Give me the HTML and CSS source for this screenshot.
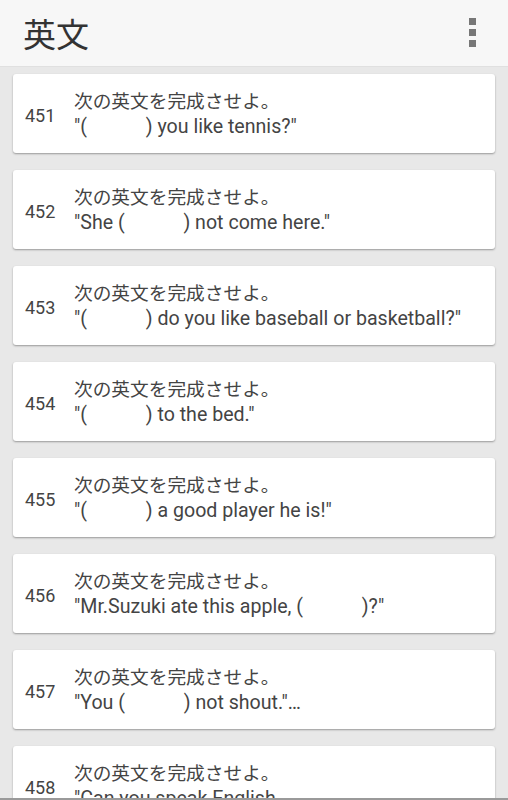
FILE: index.html
```html
<!DOCTYPE html>
<html lang="ja">
<head>
<meta charset="utf-8">
<link rel="stylesheet" href="styles.css">
</head>
<body>
<header class="appbar">
  <h1 class="title">英文</h1>
  <div class="menu" aria-label="menu"><span></span><span></span><span></span></div>
</header>
<main class="list">
  <div class="card"><span class="num">451</span><div class="text"><div>次の英文を完成させよ。</div><div class="en">"(　　　) you like tennis?"</div></div></div>
  <div class="card"><span class="num">452</span><div class="text"><div>次の英文を完成させよ。</div><div class="en">"She (　　　) not come here."</div></div></div>
  <div class="card"><span class="num">453</span><div class="text"><div>次の英文を完成させよ。</div><div class="en">"(　　　) do you like baseball or basketball?"</div></div></div>
  <div class="card"><span class="num">454</span><div class="text"><div>次の英文を完成させよ。</div><div class="en">"(　　　) to the bed."</div></div></div>
  <div class="card"><span class="num">455</span><div class="text"><div>次の英文を完成させよ。</div><div class="en">"(　　　) a good player he is!"</div></div></div>
  <div class="card"><span class="num">456</span><div class="text"><div>次の英文を完成させよ。</div><div class="en">"Mr.Suzuki ate this apple, (　　　)?"</div></div></div>
  <div class="card"><span class="num">457</span><div class="text"><div>次の英文を完成させよ。</div><div class="en">"You (　　　) not shout."…</div></div></div>
  <div class="card"><span class="num">458</span><div class="text"><div>次の英文を完成させよ。</div><div class="en">"Can you speak English</div></div></div>
</main>
<div class="bottomline"></div>
</body>
</html>
```
FILE: styles.css
```css
html, body {
  margin: 0;
  padding: 0;
}
body {
  background: #e8e8e8;
  font-family: Roboto, "Noto Sans CJK JP", sans-serif;
  width: 508px;
  height: 800px;
  overflow: hidden;
}
.appbar {
  height: 66px;
  background: #f7f7f7;
  border-bottom: 1px solid #e0e0e0;
  display: flex;
  align-items: center;
  justify-content: space-between;
  padding: 0 32px 0 23px;
}
.title {
  margin: 0;
  font-family: "Noto Sans CJK JP", sans-serif;
  font-weight: 400;
  font-size: 33px;
  color: #333;
  line-height: 1;
}
.menu {
  display: flex;
  flex-direction: column;
  gap: 4px;
  margin-top: -2px;
}
.menu span {
  width: 7px;
  height: 7px;
  background: #777;
}
.list {
  display: flex;
  flex-direction: column;
  gap: 17px;
  padding: 7px 13px 0 13px;
}
.card {
  height: 79px;
  flex-shrink: 0;
  background: #fff;
  border-radius: 3px;
  box-shadow: 0 1px 2px rgba(0,0,0,0.35);
  display: flex;
  align-items: center;
  padding-left: 12px;
  color: #444;
}
.num {
  font-size: 18px;
  width: 49px;
  padding-top: 3px;
}
.text {
  font-size: 18.7px;
  line-height: 25px;
  white-space: nowrap;
  padding-top: 2px;
}
.en {
  font-size: 19.6px;
  line-height: 24px;
}
.bottomline {
  position: fixed;
  left: 0;
  right: 0;
  bottom: 0;
  height: 2px;
  background: #9a9a9a;
}
```
